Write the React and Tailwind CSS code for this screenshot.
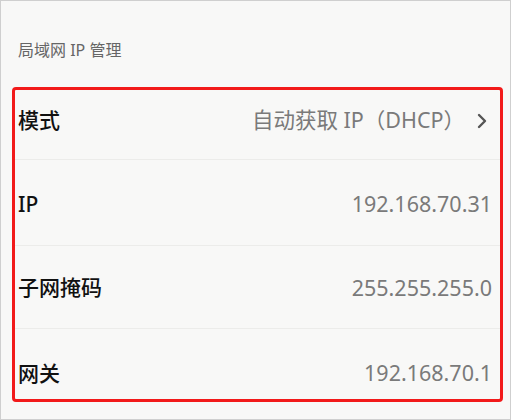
const rows = [
  { label: "模式", value: "自动获取 IP（DHCP）", arrow: true, cls: "h-[70px] pb-[8px]" },
  { label: "IP", value: "192.168.70.31", cls: "h-[86px] pt-[4px]" },
  { label: "子网掩码", value: "255.255.255.0", cls: "h-[83px] pt-[2px]" },
  { label: "网关", value: "192.168.70.1", cls: "h-[68px] pt-[21px]", last: true },
]

function Chevron() {
  return (
    <svg width="10" height="16" viewBox="0 0 10 16" className="ml-[12px] mr-[5px]">
      <path d="M2 2 L8 8 L2 14" fill="none" stroke="#555" strokeWidth="2.4" strokeLinecap="round" strokeLinejoin="round" />
    </svg>
  )
}

export default function App() {
  return (
    <div
      className="w-[511px] h-[420px] bg-[#f8f8f7] border border-[#cfcfcf] overflow-hidden"
      style={{ fontFamily: '"Noto Sans", "Noto Sans CJK SC", sans-serif' }}
    >
      <div className="h-[86px] pl-[17px] pt-[37px] text-[16px] text-[#666] leading-[24px]">
        局域网 IP 管理
      </div>

      <div className="ml-[11px] w-[491px] h-[315px] border-[3px] border-[#f21a1a] rounded-[4px]">
        {rows.map(r => (
          <div
            key={r.label}
            className={`flex items-center pl-[3px] pr-[8px] ${r.cls} ${r.last ? "" : "border-b border-[#ececea]"}`}
          >
            <span className="text-[21px] font-medium text-[#111]">{r.label}</span>
            <span className="ml-auto text-[21.5px] text-[#7a7a7a]">{r.value}</span>
            {r.arrow && <Chevron />}
          </div>
        ))}
      </div>
    </div>
  )
}
